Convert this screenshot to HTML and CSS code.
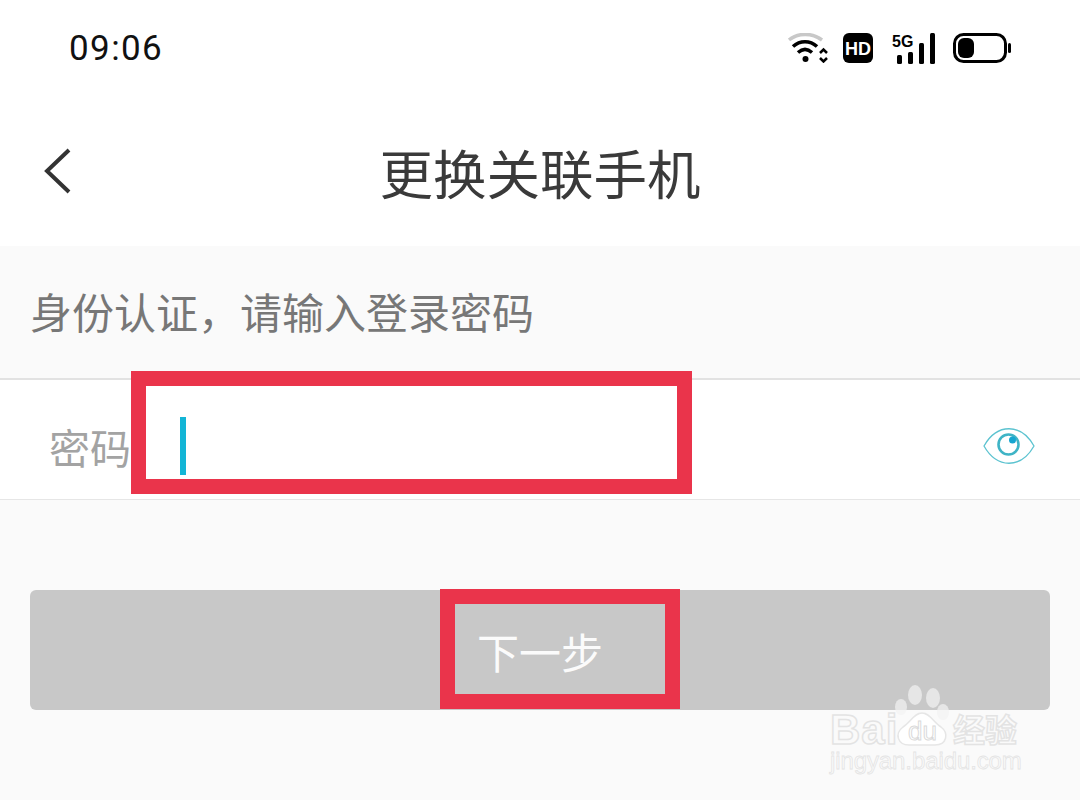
FILE: index.html
```html
<!DOCTYPE html>
<html lang="zh-CN">
<head>
    <meta charset="UTF-8">
    <meta name="viewport" content="width=device-width, initial-scale=1.0">
    <title>更换关联手机</title>
    <link rel="stylesheet" href="styles.css">
</head>
<body>
    <div class="status-bar">
        <span class="time">09:06</span>
        <div class="status-icons">
            <svg class="icon-wifi" width="40" height="30" viewBox="0 0 40 30">
                <path d="M1 7 C10 -0.500 24 -0.500 34 7" fill="none" stroke="#c8c8c8" stroke-width="3.500"/>
                <path d="M5 13.500 C12 7 22 7 29 13.500" fill="none" stroke="#000" stroke-width="3.500"/>
                <path d="M10 19.500 C14.500 15.500 19.500 15.500 24 19.500" fill="none" stroke="#000" stroke-width="3.500"/>
                <circle cx="17.500" cy="26" r="3" fill="#000"/>
                <path d="M32 20 L35.500 16.500 L39 20 M32 25 L35.500 28.500 L39 25" fill="none" stroke="#000" stroke-width="2.500"/>
            </svg>
            <svg class="icon-hd" width="30" height="30" viewBox="0 0 30 30">
                <rect width="30" height="30" rx="6" fill="#000"/>
                <text x="15" y="21.500" text-anchor="middle" class="hd-text">HD</text>
            </svg>
            <svg class="icon-signal" width="46" height="31" viewBox="0 0 46 31">
                <text x="2" y="14" class="fiveg-text">5G</text>
                <rect x="7" y="22" width="5" height="9" rx="1.500" fill="#000"/>
                <rect x="18" y="19" width="5" height="12" rx="1.500" fill="#000"/>
                <rect x="29" y="10" width="5" height="21" rx="1.500" fill="#000"/>
                <rect x="40" y="0" width="5" height="31" rx="1.500" fill="#000"/>
            </svg>
            <svg class="icon-battery" width="58" height="30" viewBox="0 0 58 30">
                <rect x="1.500" y="1.500" width="51" height="27" rx="9" fill="#fff" stroke="#000" stroke-width="3"/>
                <rect x="5" y="5" width="16" height="20" rx="6" fill="#000"/>
                <rect x="55" y="10" width="3" height="10" rx="1.500" fill="#000"/>
            </svg>
        </div>
    </div>

    <header class="title-bar">
        <svg class="back-icon" width="30" height="46" viewBox="0 0 30 46">
            <path d="M26 2 L4 23 L26 44" fill="none" stroke="#333" stroke-width="4"/>
        </svg>
        <h1>更换关联手机</h1>
    </header>

    <main class="content">
        <p class="hint">身份认证，请输入登录密码</p>

        <div class="password-row">
            <label>密码</label>
            <span class="caret"></span>
            <svg class="eye-icon" width="52" height="36" viewBox="0 0 52 36">
                <path d="M1 18 C14 -5 38 -5 51 18 C38 41 14 41 1 18 Z" fill="#fff" stroke="#5cc3d0" stroke-width="1.300"/>
                <circle cx="25.500" cy="16.500" r="10" fill="none" stroke="#3fb4c6" stroke-width="2.600"/>
                <circle cx="29.500" cy="12" r="3.500" fill="#16a5d0"/>
            </svg>
        </div>

        <button class="next-btn" type="button">下一步</button>
    </main>

    <!-- red marks from the tutorial, over the page -->
    <div class="mark mark-input"></div>
    <div class="mark mark-btn"></div>

    <div class="watermark">
        <svg class="paw" width="60" height="66" viewBox="0 0 60 66">
            <g fill="#f2f2f2" fill-opacity="0.7">
                <ellipse cx="21" cy="11" rx="7" ry="10"/>
                <ellipse cx="39" cy="14" rx="7" ry="10"/>
                <ellipse cx="7" cy="23" rx="6" ry="8"/>
                <ellipse cx="49" cy="28" rx="6" ry="8"/>
            </g>
            <path d="M28 29 C20 29 17 38 9 43 C0 50 4 61 15 61 C23 61 33 61 41 61 C53 61 55 49 47 43 C39 38 36 29 28 29 Z" fill="#fff" stroke="#e6e6e6" stroke-width="1.500"/>
        </svg>
        <div class="wm-top">
            <span class="wm-bai">Bai</span>
            <span class="wm-du">du</span>
            <span class="wm-cn">经验</span>
        </div>
        <div class="wm-url">jingyan.baidu.com</div>
    </div>
</body>
</html>
```

FILE: styles.css
```css
* { box-sizing: border-box; }
html, body { margin: 0; padding: 0; }
body { position: relative; width: 1080px; height: 800px; overflow: hidden; background: #fafafa; font-family: "Noto Sans CJK SC", "Noto Sans", sans-serif; }

.status-bar { display: flex; align-items: center; justify-content: space-between; height: 96px; padding: 0 69px; background: #fff; }
.time { font-family: Roboto, sans-serif; font-size: 35px; color: #111; letter-spacing: 1.4px; }
.status-icons { display: flex; align-items: center; gap: 15px; }
.icon-hd { margin-right: 2px; }
.hd-text { font-family: "Liberation Sans", sans-serif; font-size: 18px; font-weight: bold; fill: #fff; }
.fiveg-text { font-family: "Liberation Sans", sans-serif; font-size: 16px; font-weight: bold; fill: #000; }
.icon-signal { margin-right: 2px; }

.title-bar { display: flex; align-items: center; justify-content: center; position: relative; height: 150px; background: #fff; }
.title-bar h1 { margin: 0; font-size: 53.500px; font-weight: 400; color: #3a3a3a; }
.back-icon { position: absolute; left: 43px; top: 52px; }

.content { display: flex; flex-direction: column; }
.hint { display: flex; align-items: center; height: 134px; margin: 0; padding: 0 30px 4px; font-size: 42px; color: #777; border-bottom: 2px solid #e2e2e2; }

.password-row { display: flex; align-items: center; height: 120px; padding: 12px 45px 0 49px; background: #fff; border-bottom: 1px solid #e6e6e6; }
.password-row label { width: 131px; font-size: 41px; color: #a3a3a3; }
.caret { width: 6px; height: 58px; background: #13b5d6; }
.eye-icon { margin-left: auto; }

.next-btn { display: block; width: 1020px; height: 120px; margin: 90px 0 0 30px; border: none; border-radius: 6px; background: #c8c8c8; color: #fbfbfb; font-family: inherit; font-size: 42px; }

.mark { position: absolute; border: 15px solid #ea344b; }
.mark-input { left: 131px; top: 371px; width: 561px; height: 123px; }
.mark-btn { left: 440px; top: 589px; width: 240px; height: 120px; }

.watermark { position: absolute; left: 828px; top: 684px; width: 200px; height: 90px; color: transparent; white-space: nowrap; }
.paw { position: absolute; left: 66px; top: 0; }
.wm-top { position: absolute; left: 0; top: 0; width: 200px; height: 66px; -webkit-text-stroke: 1.5px rgba(226, 226, 226, 0.95); }
.wm-bai { position: absolute; left: 2px; top: 28px; font-family: "Liberation Sans", sans-serif; font-size: 42px; line-height: 36px; letter-spacing: 1px; font-weight: bold; }
.wm-du { position: absolute; left: 80px; top: 34px; font-family: "Liberation Sans", sans-serif; font-size: 26px; line-height: 26px; -webkit-text-stroke: 1px rgba(215, 215, 215, 0.95); }
.wm-cn { position: absolute; left: 125px; top: 26px; font-size: 32px; line-height: 36px; font-weight: 700; }
.wm-url { position: absolute; left: 2px; top: 66px; font-family: "Liberation Sans", sans-serif; font-size: 24px; line-height: 22px; letter-spacing: -0.1px; -webkit-text-stroke: 0.8px rgba(226, 226, 226, 0.95); }
```
